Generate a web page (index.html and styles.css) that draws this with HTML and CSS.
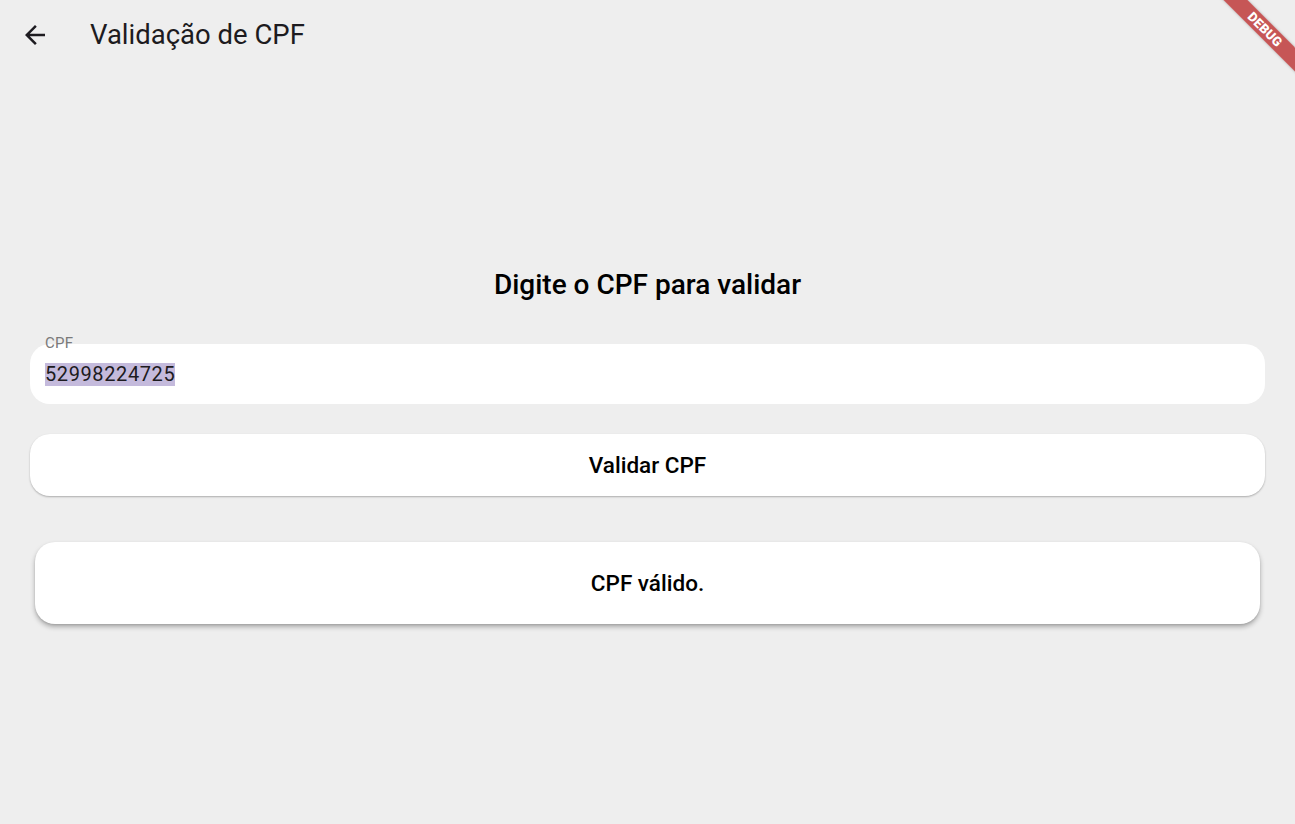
FILE: index.html
```html
<!DOCTYPE html>
<html lang="pt">
<head>
<meta charset="utf-8">
<title>Validação de CPF</title>
<link rel="stylesheet" href="styles.css">
</head>
<body>
  <header class="appbar">
    <button class="back" aria-label="Voltar">
      <svg viewBox="0 0 24 24" width="30" height="30"><path d="M20 11H7.83l5.59-5.59L12 4l-8 8 8 8 1.41-1.41L7.83 13H20v-2z" fill="#1d1b20"/></svg>
    </button>
    <h1 class="title">Validação de CPF</h1>
  </header>
  <main class="content">
    <h2 class="heading">Digite o CPF para validar</h2>
    <div class="field">
      <span class="field-label">CPF</span>
      <div class="field-input"><span class="selected">52998224725</span></div>
    </div>
    <button class="btn">Validar CPF</button>
    <div class="card">CPF válido.</div>
  </main>
  <div class="debug-banner">DEBUG</div>
</body>
</html>
```
FILE: styles.css
```css
html, body {
  margin: 0;
  padding: 0;
}
body {
  width: 1295px;
  height: 824px;
  overflow: hidden;
  position: relative;
  background: #eeeeee;
  font-family: Roboto, "Liberation Sans", sans-serif;
  color: #1d1b20;
}
.appbar {
  height: 70px;
  display: flex;
  align-items: center;
}
.back {
  width: 70px;
  height: 70px;
  display: flex;
  align-items: center;
  justify-content: center;
  background: none;
  border: none;
  padding: 0;
}
.back svg { display: block; }
.title {
  margin: 0 0 0 20px;
  font-size: 27.5px;
  font-weight: 400;
  line-height: 34px;
  color: #1d1b20;
}
.content {
  display: flex;
  flex-direction: column;
  padding: 0 30px;
}
.heading {
  margin: 199px 0 0;
  text-align: center;
  font-size: 28px;
  font-weight: 500;
  line-height: 32px;
  color: #000;
}
.field {
  position: relative;
  margin-top: 43px;
  height: 60px;
  background: #fff;
  border-radius: 20px;
}
.field-label {
  position: absolute;
  left: 15px;
  top: -8px;
  font-size: 15px;
  line-height: 15px;
  color: #7a7a7a;
  letter-spacing: 0.3px;
}
.field-input {
  padding-left: 15px;
  height: 60px;
  display: flex;
  align-items: center;
  font-size: 20px;
  letter-spacing: 0.6px;
  color: #1d1b20;
}
.selected {
  background: #c4badc;
  line-height: 23px;
}
.btn {
  margin-top: 30px;
  height: 62px;
  background: #fff;
  border: none;
  border-radius: 20px;
  box-shadow: 0 1px 2px rgba(0,0,0,0.28);
  font-family: Roboto, "Liberation Sans", sans-serif;
  font-size: 22.5px;
  font-weight: 500;
  color: #000;
}
.card {
  margin: 46px 5px 0;
  height: 82px;
  background: #fff;
  border-radius: 20px;
  box-shadow: 0 3px 5px rgba(0,0,0,0.28), 0 1px 2px rgba(0,0,0,0.1);
  display: flex;
  align-items: center;
  justify-content: center;
  font-size: 22.5px;
  font-weight: 500;
  color: #000;
}
.debug-banner {
  position: absolute;
  left: 1205px;
  top: 21px;
  width: 120px;
  height: 17px;
  transform: rotate(45deg);
  background: rgba(183, 28, 28, 0.72);
  box-shadow: 0 0 3px rgba(0,0,0,0.25);
  color: #fff;
  font-size: 13px;
  font-weight: 900;
  line-height: 17px;
  text-align: center;
  letter-spacing: 0.2px;
}
```
